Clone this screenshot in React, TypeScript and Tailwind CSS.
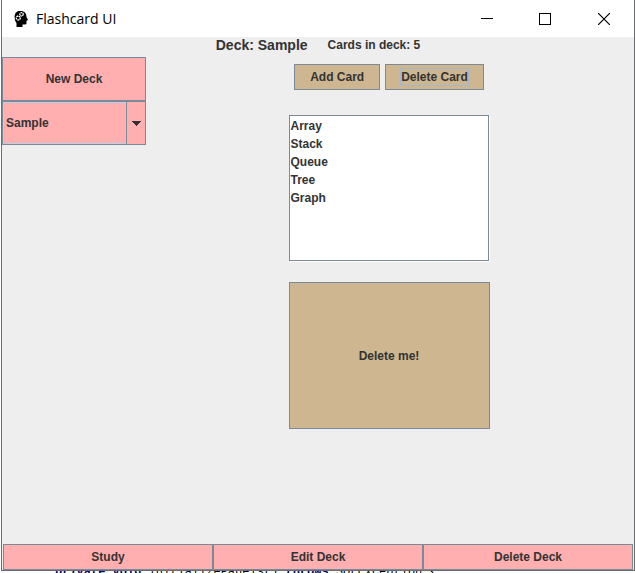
import { useState } from 'react';
import type { ReactNode } from 'react';

const cards = ['Array', 'Stack', 'Queue', 'Tree', 'Graph'];

function HeadIcon() {
  return (
    <svg width="16" height="18" viewBox="0 0 16 18" aria-hidden="true">
      <path
        d="M5 1h4l2.500 1L13 4l.5 3L15 10l-1.500.8v2.700l-1 1H9.500V17H3.500v-4L2 10.500 1.500 6 2.500 3z"
        fill="#000"
      />
      <g fill="none" stroke="#fff" strokeWidth="1.300">
        <circle cx="8.500" cy="4.300" r="1.700" strokeDasharray="1.600 .5" />
        <circle cx="5.300" cy="8" r="2" strokeDasharray="1.700 .5" />
      </g>
    </svg>
  );
}

function TitleBar() {
  return (
    <header className="flex h-[37px] items-center bg-white pl-[11px] text-black">
      <HeadIcon />
      <h1 className="ml-[7px] flex-1 font-['Open_Sans',sans-serif] text-sm font-normal">Flashcard UI</h1>
      <div className="flex h-full">
        <button aria-label="Minimize" className="flex w-[58px] items-center justify-center">
          <svg width="12" height="12" shapeRendering="crispEdges">
            <path d="M0 5.500h12" stroke="#000" />
          </svg>
        </button>
        <button aria-label="Maximize" className="flex w-[58px] items-center justify-center">
          <svg width="12" height="12" shapeRendering="crispEdges">
            <path d="M.5 .5h11v11H.5z" fill="none" stroke="#000" />
          </svg>
        </button>
        <button aria-label="Close" className="flex w-[60px] items-center justify-center">
          <svg width="12" height="12">
            <path d="M0 0l12 12M12 0L0 12" stroke="#000" strokeWidth="1.200" />
          </svg>
        </button>
      </div>
    </header>
  );
}

function DeckButton({ children }: { children: ReactNode }) {
  return <button className="flex-1 border border-[#7a8a99] bg-[#ffafaf]">{children}</button>;
}

export default function App() {
  const [deck, setDeck] = useState('Sample');

  return (
    <div className="flex h-screen flex-col bg-white font-['Liberation_Sans',Arial,sans-serif] text-xs font-bold text-[#333333]">
      <div className="ml-px flex min-h-0 flex-1 flex-col border-x border-b border-[#6b6e70] bg-[#eeeeee]">
        <TitleBar />
        <div className="flex h-5 items-center justify-center gap-5 pb-1">
          <h2 className="text-sm">Deck: Sample</h2>
          <span>Cards in deck: 5</span>
        </div>

        <div className="flex flex-1">
          <aside className="flex w-36 flex-col">
            <button className="h-11 border border-[#7a8a99] bg-[#ffafaf]">New Deck</button>
            <div className="grid h-11 border border-[#7a8a99] bg-[#ffafaf]">
              <select
                aria-label="Deck"
                value={deck}
                onChange={(e) => setDeck(e.target.value)}
                className="col-start-1 row-start-1 appearance-none rounded-none pl-[3px]"
              >
                <option>Sample</option>
              </select>
              <div className="pointer-events-none col-start-1 row-start-1 flex">
                <div className="flex-1 border border-[#b8cfe5]" />
                <div className="flex w-[19px] items-center justify-center border-l border-[#7a8a99]">
                  <svg width="10" height="5" shapeRendering="crispEdges">
                    <path d="M0 0h10L5 5z" fill="#333333" />
                  </svg>
                </div>
              </div>
            </div>
          </aside>

          <main className="flex flex-1 flex-col items-center pt-[7px] pr-0.5">
            <div className="flex gap-[5px]">
              <button className="h-[26px] border border-[#7a8a99] bg-[#ceb691] px-[15px]">Add Card</button>
              <button className="h-[26px] border border-[#7a8a99] bg-[#ceb691] px-[14px]">
                <span className="block border border-[#a3b8cc]">Delete Card</span>
              </button>
            </div>
            <ul className="mt-[25px] mr-px h-[146px] w-[200px] border border-[#7a8a99] bg-white pt-px pl-px leading-[18px] shadow-[1px_1px_0_#ffffff]">
              {cards.map((card) => (
                <li key={card}>{card}</li>
              ))}
            </ul>
            <button className="mt-[21px] h-[147px] w-[201px] border border-[#7a8a99] bg-[#ceb691]">
              Delete me!
            </button>
          </main>
        </div>

        <nav className="flex h-[26px] px-px">
          <DeckButton>Study</DeckButton>
          <DeckButton>Edit Deck</DeckButton>
          <DeckButton>Delete Deck</DeckButton>
        </nav>
      </div>

      <div className="flex h-0.5 items-center overflow-hidden pl-[55px] font-['Liberation_Mono',monospace] font-normal whitespace-pre text-black">
        <code>
          <b className="text-[#00007f]">private void</b> initializePanels(){' '}
          <b className="text-[#00007f]">throws</b> SQLException {'{'}
        </code>
      </div>
    </div>
  );
}
